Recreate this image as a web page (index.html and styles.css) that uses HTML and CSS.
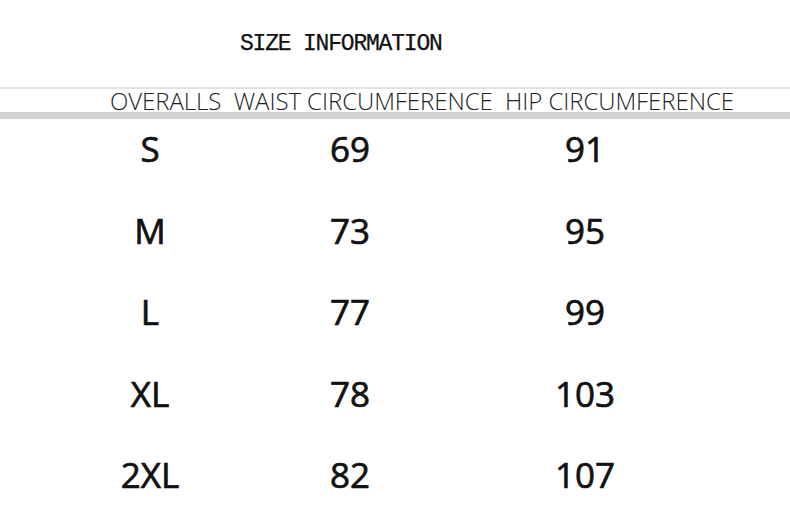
FILE: index.html
```html
<!DOCTYPE html>
<html>
<head>
<meta charset="utf-8">
<link rel="stylesheet" href="styles.css">
</head>
<body>
<div class="page">
  <h1 class="title">SIZE INFORMATION</h1>
  <div class="rule-thin"></div>
  <div class="header">OVERALLS&nbsp; WAIST CIRCUMFERENCE&nbsp; HIP CIRCUMFERENCE</div>
  <div class="rule-thick"></div>
  <div class="table">
    <div class="row"><span>S</span><span>69</span><span>91</span></div>
    <div class="row"><span>M</span><span>73</span><span>95</span></div>
    <div class="row"><span>L</span><span>77</span><span>99</span></div>
    <div class="row"><span>XL</span><span>78</span><span>103</span></div>
    <div class="row"><span>2XL</span><span>82</span><span>107</span></div>
  </div>
</div>
</body>
</html>
```
FILE: styles.css
```css
html, body { margin: 0; padding: 0; background: #fff; }
.page { width: 790px; height: 518px; overflow: hidden; }
.title {
  margin: 0;
  padding: 31px 0 0 240px;
  height: 56px;
  box-sizing: border-box;
  font-family: "Liberation Mono", monospace;
  font-weight: normal;
  font-size: 23px;
  letter-spacing: -1.2px;
  line-height: 26px;
  color: #111;
  -webkit-text-stroke: 0.25px #111;
}
.rule-thin { height: 2px; background: #e2e2e2; margin-top: 31px; }
.header {
  padding-left: 110px;
  height: 23px;
  font-family: "Open Sans", sans-serif;
  font-weight: 300;
  font-size: 24px;
  letter-spacing: -0.06px;
  line-height: 23px;
  color: #222;
  white-space: nowrap;
}
.rule-thick { height: 7px; background: #d2d2d2; }
.table { display: flex; flex-direction: column; padding-top: 10px; }
.row {
  display: grid;
  grid-template-columns: 300px 100px 370px;
  height: 81.5px;
  font-family: "Open Sans", sans-serif;
  font-weight: 400;
  font-size: 35px;
  line-height: 40px;
  color: #111;
  -webkit-text-stroke: 0.7px #111;
}
.row span { text-align: center; }
```
